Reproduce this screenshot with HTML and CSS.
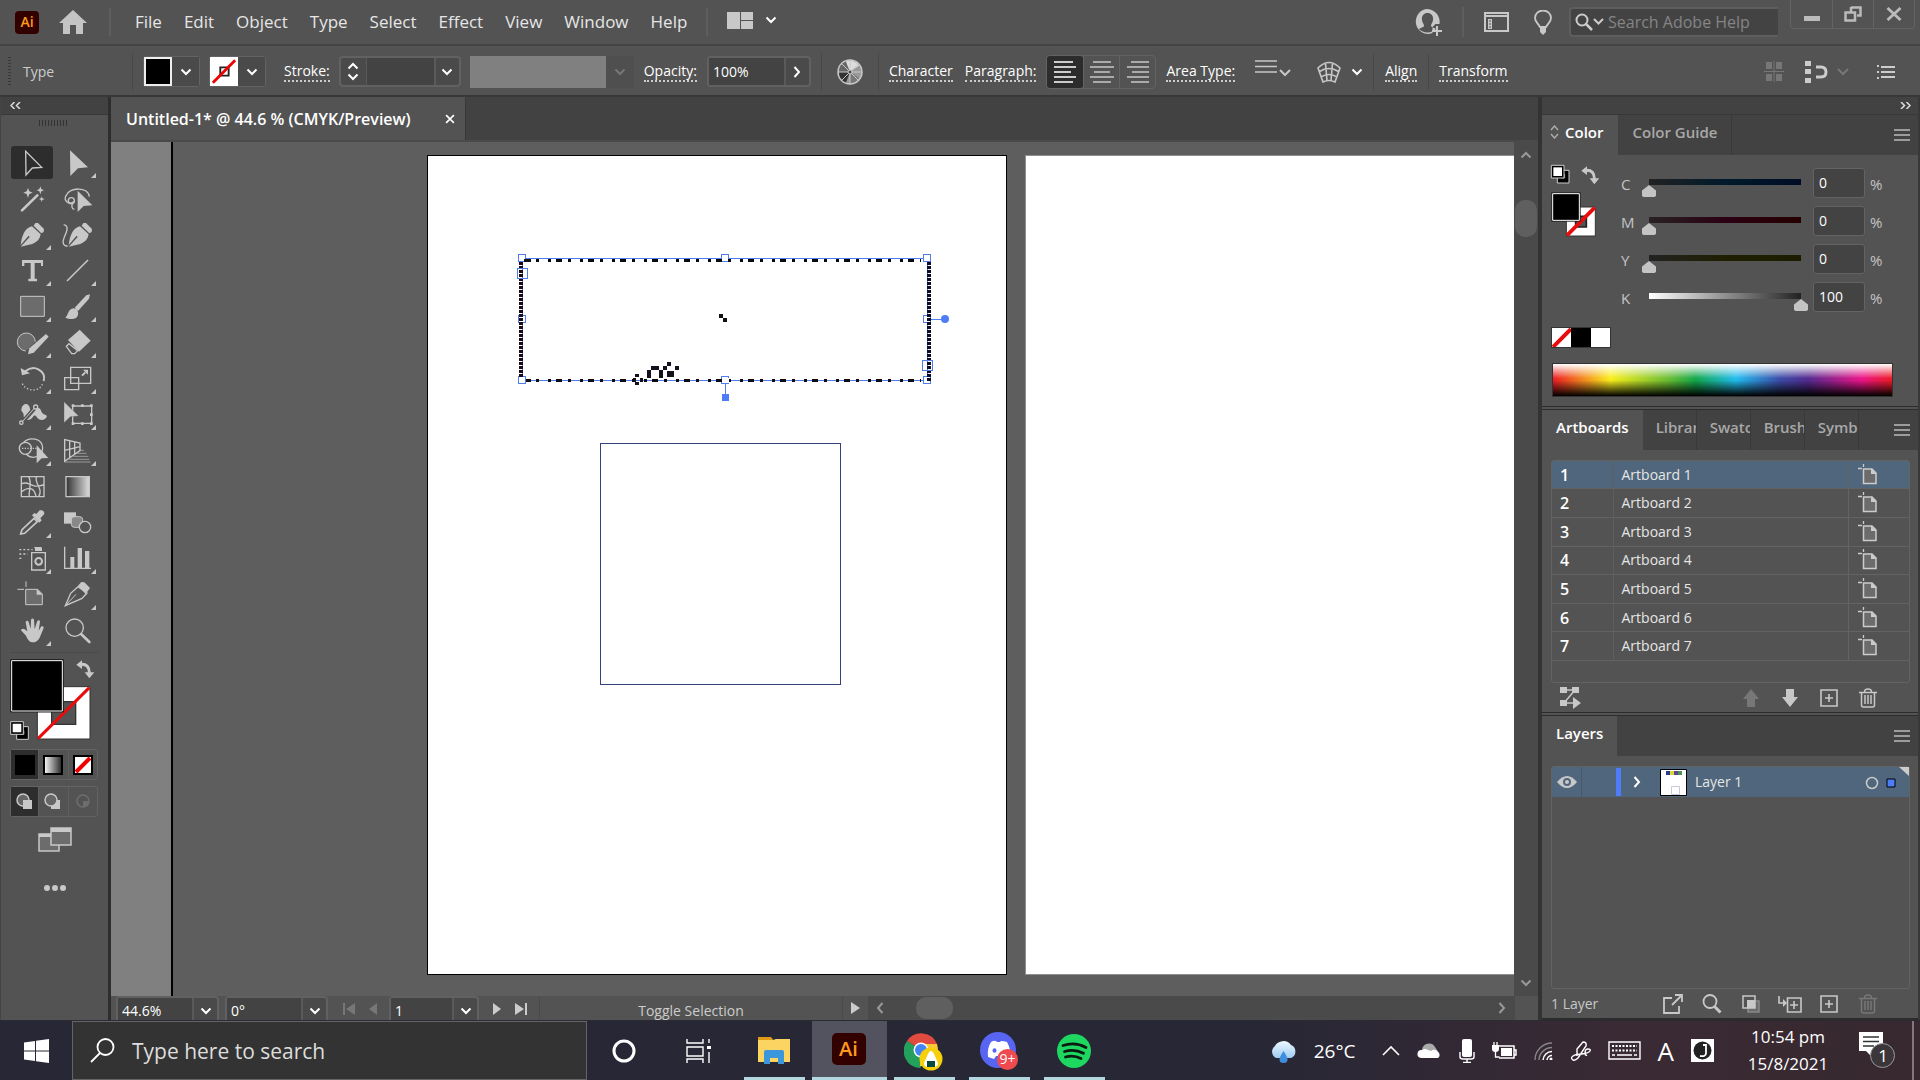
FILE: index.html
```html
<!DOCTYPE html>
<html lang="en">
<head>
<meta charset="utf-8">
<title>Untitled-1 - Adobe Illustrator</title>
<link rel="stylesheet" href="styles.css">
</head>
<body>
<svg class="defs" aria-hidden="true">
  <defs>
    <symbol id="chev-down" viewBox="0 0 12 8"><path d="M1.500 1.500 6 6l4.500-4.500" fill="none" stroke="currentColor" stroke-width="2"/></symbol>
    <symbol id="chev-up" viewBox="0 0 12 8"><path d="M1.500 6.500 6 2l4.500 4.500" fill="none" stroke="currentColor" stroke-width="2"/></symbol>
    <symbol id="chev-right" viewBox="0 0 8 12"><path d="M1.500 1 6 6l-4.500 5" fill="none" stroke="currentColor" stroke-width="2"/></symbol>
    <symbol id="chev-left" viewBox="0 0 8 12"><path d="M6.500 1 2 6l4.500 5" fill="none" stroke="currentColor" stroke-width="2"/></symbol>
    <symbol id="lines" viewBox="0 0 16 12"><path d="M0 1h16M0 6h16M0 11h16" stroke="currentColor" stroke-width="1.500"/></symbol>
    <symbol id="plus-box" viewBox="0 0 18 18"><path d="M1 1h16v16H1zM9 5v8M5 9h8" fill="none" stroke="currentColor" stroke-width="1.600"/></symbol>
    <symbol id="trash" viewBox="0 0 18 20"><path d="M0 4.500h18M5.500 4c0-4 7-4 7 0M2.500 5v12q0 2 2 2h9q2 0 2-2V5M6 7v9M9 7v9M12 7v9" fill="none" stroke="currentColor" stroke-width="1.500"/></symbol>
    <symbol id="page" viewBox="0 0 20 22"><path d="M5.500 5h8.500l4 4v10.500H5.500z" fill="#6c6c6c" stroke="#ccc" stroke-width="1.500"/><path d="M13 4.500V10h5.500z" fill="#ccc"/><path d="M0 4.500h4M5.500 0v3" stroke="#ccc" stroke-width="1.300"/></symbol>
    <symbol id="swap" viewBox="228 480 56 56"><path d="M244 493q24-1 24 26" fill="none" stroke="#c8c8c8" stroke-width="9"/><path d="m229 494 17-13v26zM254 517h29l-15 18z" fill="#c8c8c8"/></symbol>
    <symbol id="default-colors" viewBox="28 661 60 60"><path d="M50 680h35v38H50z" fill="#000" stroke="#ccc" stroke-width="3"/><path d="M62 692h10v11H62z" fill="#535353" stroke="#aaa" stroke-width="2"/><path d="M32 665h38v38H32z" fill="#000" stroke="#ccc" stroke-width="3"/><path d="M38 671h26v26H38z" fill="#fff"/></symbol>
    <linearGradient id="bw"><stop stop-color="#fff"/><stop offset="1" stop-color="#222"/></linearGradient>
    <linearGradient id="wb"><stop stop-color="#333"/><stop offset="1" stop-color="#ddd"/></linearGradient>
    <linearGradient id="cloud" x2="0" y2="1"><stop stop-color="#eef7ff"/><stop offset="1" stop-color="#9ecdf3"/></linearGradient>
  </defs>
</svg>

<div class="app">
  <header class="menubar">
    <span class="logo">Ai</span>
    <button class="home" aria-label="Home"><svg width="28" height="24" viewBox="0 0 28 24"><path d="M14 0 28 13h-4v11h-7v-9h-6v9H4V13H0z" fill="#c4c4c4"/></svg></button>
    <nav class="menus">
      <button>File</button><button>Edit</button><button>Object</button><button>Type</button><button>Select</button><button>Effect</button><button>View</button><button>Window</button><button>Help</button>
    </nav>
    <button class="arrange" aria-label="Arrange documents"><svg width="26" height="17" viewBox="0 0 26 17"><path d="M0 0h13v17H0zM14 0h12v8H14zM14 9h12v8H14z" fill="#c8c8c8"/></svg><svg width="12" height="8"><use href="#chev-down"/></svg></button>
    <div class="menubar-right">
      <button class="account" aria-label="Account"><svg width="28" height="27" viewBox="0 0 28 27"><path fill-rule="evenodd" d="M12.500 0a12 12.500 0 1 0 5 24v-6l3-3h4A13 13 0 0 0 12.500 0zM12.500 4c4 0 6 3 5.500 7-.3 3-2 4-2 5.500 0 2 3 2 5 3.500-4 4.500-13 4.500-17 0 2-1.500 5-1.500 5-3.500C9 15 7.300 14 7 11c-.5-4 1.500-7 5.500-7z" fill="#c8c8c8"/><path d="M22 17v10M17 22h10" stroke="#c8c8c8" stroke-width="2"/></svg></button>
      <button class="panel-toggle" aria-label="Toggle panel"><svg width="25" height="20" viewBox="0 0 25 20"><path d="M1 1h23v18H1z" fill="none" stroke="#c8c8c8" stroke-width="2"/><path d="M1 4h23" stroke="#c8c8c8" stroke-width="2"/><path d="M4 7h4v10H4z" fill="#c8c8c8"/><path d="M5 9h2M5 12h2M5 15h2" stroke="#535353"/></svg></button>
      <button class="bulb" aria-label="Learn"><svg width="18" height="25" viewBox="0 0 18 25"><path d="M6 17C4 13 1 12 1 8a8 7.500 0 0 1 16 0c0 4-3 5-5 9z" fill="none" stroke="#c8c8c8" stroke-width="1.800"/><path d="M6 17h6v5l-3 3-3-3z" fill="#c8c8c8"/></svg></button>
      <label class="help-search"><svg width="30" height="18" viewBox="0 0 30 18"><circle cx="7" cy="7" r="5.500" fill="none" stroke="#ccc" stroke-width="2"/><path d="m11 11 6 6" stroke="#ccc" stroke-width="2.500"/><path d="m19 6 4.500 4.500L28 6" fill="none" stroke="#ccc" stroke-width="2"/></svg><input type="text" placeholder="Search Adobe Help" aria-label="Search Adobe Help"></label>
      <div class="window-buttons">
        <button aria-label="Minimize"><svg width="16" height="16" viewBox="0 0 16 16"><path d="M0 10h16v5H0z" fill="#bbb"/></svg></button>
        <button aria-label="Restore"><svg width="18" height="16" viewBox="0 0 18 16"><path d="M7 1.500h9.500v8H13M1.500 6.500H11v8H1.500z" fill="none" stroke="#bbb" stroke-width="2.500"/><path d="M7 1v5" stroke="#bbb" stroke-width="2.500"/></svg></button>
        <button aria-label="Close"><svg width="16" height="14" viewBox="0 0 16 14"><path d="m1.500 1 13 12M14.500 1l-13 12" stroke="#bbb" stroke-width="2.800"/></svg></button>
      </div>
    </div>
  </header>

  <section class="controlbar">
    <div class="grip"></div>
    <div class="context">Type</div>
    <div class="swatch-pick"><span class="chip chip-black"></span><button aria-label="Fill options"><svg width="12" height="8"><use href="#chev-down"/></svg></button></div>
    <div class="swatch-pick"><span class="chip"><svg width="26" height="27" viewBox="0 0 28 28"><path d="M10 9.500h9v9h-9z" fill="none" stroke="#222" stroke-width="2"/><path d="M2 26 26 2" stroke="#e00" stroke-width="3"/></svg></span><button aria-label="Stroke options"><svg width="12" height="8"><use href="#chev-down"/></svg></button></div>
    <label class="dotted stroke-label" for="stroke-w">Stroke:</label>
    <div class="combo stroke-combo">
      <div class="spinner"><button aria-label="Increase"><svg width="12" height="8"><use href="#chev-up"/></svg></button><button aria-label="Decrease"><svg width="12" height="8"><use href="#chev-down"/></svg></button></div>
      <input id="stroke-w" type="text">
      <button aria-label="Stroke widths"><svg width="12" height="8"><use href="#chev-down"/></svg></button>
    </div>
    <div class="profile"><span></span><button disabled aria-label="Profile"><svg width="12" height="8"><use href="#chev-down"/></svg></button></div>
    <label class="dotted opacity-label" for="opacity">Opacity:</label>
    <div class="combo opacity-combo"><input id="opacity" type="text" value="100%"><button aria-label="Opacity slider"><svg width="8" height="12"><use href="#chev-right"/></svg></button></div>
    <button class="recolor" aria-label="Recolor artwork"><svg width="26" height="26" viewBox="0 0 26 26"><circle cx="13" cy="13" r="12" fill="#999" stroke="#c8c8c8" stroke-width="1.500"/><path d="M13 13 9 2.500A11 11 0 0 0 2 13z" fill="#666"/><path d="M13 13 9 2.500a11 11 0 0 1 13 4z" fill="#ddd"/><path d="M13 13H2a11 11 0 0 0 7 10.500z" fill="#333"/><path d="M13 13v11a11 11 0 0 0 9-5z" fill="#777"/><path d="M13 1v24M1 13h24M4.500 4.500l17 17M21.500 4.500l-17 17" stroke="#c8c8c8" stroke-width="1"/><circle cx="13" cy="13" r="2" fill="#444" stroke="#ccc"/></svg></button>
    <button class="dotted">Character</button>
    <button class="dotted">Paragraph:</button>
    <div class="align-group">
      <button class="on" aria-label="Align left"><svg width="24" height="22" viewBox="0 0 24 22"><path d="M1 1h19M1 6h22M1 11h17M1 16h22M1 21h19" stroke="#fff" stroke-width="1.500"/></svg></button><button aria-label="Align center"><svg width="24" height="22" viewBox="0 0 24 22"><path d="M3 1h18M0 6h24M4 11h16M0 16h24M3 21h18" stroke="#c8c8c8" stroke-width="1.500"/></svg></button><button aria-label="Align right"><svg width="24" height="22" viewBox="0 0 24 22"><path d="M5 1h18M1 6h22M6 11h17M1 16h22M5 21h18" stroke="#c8c8c8" stroke-width="1.500"/></svg></button>
    </div>
    <button class="dotted">Area Type:</button>
    <button class="area-opts" aria-label="Area type options"><svg width="36" height="18" viewBox="0 0 36 18"><path d="M0 2h22M0 7.500h22M0 13h22" stroke="#c8c8c8" stroke-width="1.600"/><path d="m25 11 5 5 5-5" fill="none" stroke="#c8c8c8" stroke-width="2"/></svg></button>
    <button class="warp" aria-label="Envelope"><svg width="24" height="22" viewBox="0 0 24 22"><path d="M1 7Q12-4 23 7L18 21q-6-3-12 0zM8.500 2 10 19.500M15.500 2 14 19.500M2.500 10.500q9.500-6 19 0M4 16q8-5 16 0" fill="none" stroke="#c8c8c8" stroke-width="1.600"/></svg><svg width="12" height="8"><use href="#chev-down"/></svg></button>
    <div class="bar-cell"><button class="dotted">Align</button></div>
    <button class="dotted transform">Transform</button>
    <div class="controlbar-right">
      <svg width="20" height="21" viewBox="0 0 20 21"><path d="M2 1h6v7H2zM12 1h6v7h-6zM2 13h6v7H2zM12 13h6v7h-6zM0 10h20v1H0zM9.500 0h1v21h-1z" fill="#777"/></svg>
      <svg width="46" height="22" viewBox="0 0 46 22"><path d="M0 0h6v5H0zM0 8h6v5H0zM0 17h6v5H0z" fill="#ccc"/><path d="M11 6h5q5 0 5 5t-5 5h-5" fill="none" stroke="#ccc" stroke-width="3"/><path d="m33 8 5 5 5-5" fill="none" stroke="#777" stroke-width="2"/></svg>
      <svg width="18" height="14" viewBox="0 0 18 14"><path d="M0 1h2M0 7h2M0 13h2M4 2h14M4 7h14M4 12h14" stroke="#ccc" stroke-width="2"/></svg>
    </div>
  </section>

  <main class="workspace">
    <aside class="tools">
      <div class="dock-head"><svg width="11" height="7" viewBox="0 0 11 7"><path d="M4.500 0 1 3.500 4.500 7M10 0 6.500 3.500 10 7" fill="none" stroke="#ddd" stroke-width="1.500"/></svg></div>
      <div class="tool-grip"></div>
      <div class="tool-grid">
        <button class="on" aria-label="Selection"><svg viewBox="33 18 126 99"><path d="m77 34 48 48-28 2-19 21z" class="l"/></svg></button>
        <button class="more" aria-label="Direct selection"><svg viewBox="168 18 126 99"><path d="m210 31 54 51-30 3-23 23z" class="f"/></svg></button>
        <button aria-label="Magic wand"><svg viewBox="33 126 126 99"><path d="m66 211 46-45" class="l" stroke-width="7"/><path d="m84 144 4 10 10 4-10 4-4 11-4-11-10-4 10-4zM121 139l3 8 8 4-8 3-3 9-3-9-8-3 8-4zM125 169l2 6 7 2-7 3-2 6-2-6-6-3 6-2z" class="f"/></svg></button>
        <button aria-label="Lasso"><svg viewBox="168 126 126 99"><path d="M224 184c-18 14-34-3-26-17 10-26 66-28 70 3M223 207q-10 2-6-20" class="l"/><circle cx="214" cy="182" r="9" class="l"/><path d="m233 152 44 44-26 2-18 18z" class="f"/></svg></button>
        <button class="more" aria-label="Pen"><svg viewBox="33 234 126 99"><path d="m96 259 26 24q-4 22-25 29l-35 8 27-29-3-4-24 28q6-50 34-56zM106 249l8 0 18 18-1 9-7 4-23-23z" class="f"/></svg></button>
        <button aria-label="Curvature"><svg viewBox="168 234 126 99"><path d="m240 259 26 24q-4 22-25 29l-35 8 27-29-3-4-24 28q6-50 34-56zM250 249l8 0 18 18-1 9-7 4-23-23z" class="f"/><path d="M191 254c18 4 8 24 2 37-7 16-4 28 10 27" class="l"/></svg></button>
        <button class="more" aria-label="Type"><svg viewBox="33 342 126 99"><path d="M66 360h63v18h-6v-9h-19v47h7v8H85v-8h7v-47H73v9h-7z" class="f"/></svg></button>
        <button class="more" aria-label="Line"><svg viewBox="168 342 126 99"><path d="m201 423 63-63" class="l" stroke-width="5"/></svg></button>
        <button class="more" aria-label="Rectangle"><svg viewBox="33 450 126 99"><path d="M62 469h71v60H62z" class="g"/></svg></button>
        <button class="more" aria-label="Paintbrush"><svg viewBox="168 450 126 99"><path d="m270 463-3 13-33 37-10-10 35-37zM221 505c19 3 18 32-3 32-9 0-18 0-22-5 10-5 6-25 25-27z" class="f"/></svg></button>
        <button class="more" aria-label="Shaper"><svg viewBox="33 558 126 99"><path d="M77 633a27 27 0 1 1 29-28" class="g"/><path d="m138 582 8 8-45 48-17 5 4-18z" class="f"/></svg></button>
        <button class="more" aria-label="Eraser"><svg viewBox="168 558 126 99"><path d="m239 569 33 33-35 33-33-35z" class="f"/><path d="m207 611-8 8 16 22 9 0 9-9z" class="l"/></svg></button>
        <button class="more" aria-label="Rotate"><svg viewBox="33 666 126 99"><path d="M76 694c26-22 63-2 55 29" class="l" stroke-width="6"/><path d="m62 684 4 22 24-6z" class="f"/><path d="M67 731c12 24 50 26 60 2" class="l" stroke-dasharray="4 6"/></svg></button>
        <button class="more" aria-label="Scale"><svg viewBox="168 666 126 99"><path d="M212 682h60v48h-60zM194 713h42v36h-42z" class="l"/><path d="m246 707 10-10" class="l" stroke-width="6"/><path d="M249 689h15v15z" class="f"/></svg></button>
        <button class="more" aria-label="Width"><svg viewBox="33 774 126 99"><path d="M64 812c0-25 24-26 26-6l4 14c14-20 26-20 30-6 3 10 13 10 17 14-4 14-23 17-31 3-4-6-8-6-12 1-8 12-27 10-27-4 0-8-2-11-7-16z" class="f"/><path d="m66 848 40-46" fill="none" stroke="#535353" stroke-width="12"/><path d="m66 846 38-42" class="l" stroke-width="3"/><circle cx="64" cy="848" r="5" class="l"/><circle cx="107" cy="801" r="6" class="l"/></svg></button>
        <button class="more" aria-label="Free transform"><svg viewBox="168 774 126 99"><path d="M218 798h57v52h-57z" class="l"/><path d="M215 793h8v8h-8zM243 793h8v8h-8zM270 793h8v8h-8zM270 820h8v8h-8zM270 847h8v8h-8zM243 847h8v8h-8zM215 847h8v8h-8z" class="f"/><path d="m192 785 44 43-25 2-19 18z" class="f" stroke="#535353"/></svg></button>
        <button class="more" aria-label="Shape builder"><svg viewBox="33 882 126 99"><circle cx="76" cy="925" r="18" class="l"/><path d="M70 908c18-19 57-14 58 16 0 15-12 28-28 28-12 0-17-5-22-10" class="l"/><path d="M66 925h45" class="l" stroke-dasharray="4 4"/><path d="m110 916 35 38-20 1-15 15z" class="f"/></svg></button>
        <button class="more" aria-label="Perspective grid"><svg viewBox="168 882 126 99"><path d="M194 899v65l46-32v-23zM194 931l46-11M209 903v50M224 906v36" class="l"/><path d="M240 931h12M232 940h27M220 949h45M208 958h60M194 966h78" class="l" stroke-width="3" opacity=".6"/></svg></button>
        <button aria-label="Mesh"><svg viewBox="33 990 126 99"><path d="M64 1010h68v60H64zM64 1032c24-14 26 18 68 2M64 1056c26-20 40-10 44 14M86 1010c12 22-2 42 2 60M110 1010c-10 18 22 36 6 60" class="l"/></svg></button>
        <button aria-label="Gradient"><svg viewBox="168 990 126 99"><path d="M198 1010h70v60h-70z" fill="url(#wb)" stroke="#c8c8c8" stroke-width="4"/></svg></button>
        <button class="more" aria-label="Eyedropper"><svg viewBox="33 18 126 99"><path d="M102 55 66 89l-4 13 12-2 38-35z" class="l" stroke-width="5"/><path d="m96 46 7-7 6 3 10-11q14-3 14 11l-12 13 4 6-7 7z" class="f"/></svg></button>
        <button aria-label="Blend"><svg viewBox="168 18 126 99"><path d="M192 37h36v34h-36z" class="f"/><rect x="214" y="50" width="34" height="32" rx="9" fill="#888" stroke="#c8c8c8" stroke-width="3"/><circle cx="255" cy="81" r="17" fill="#535353" stroke="#c8c8c8" stroke-width="4"/></svg></button>
        <button class="more" aria-label="Symbol sprayer"><svg viewBox="33 126 126 99"><path d="M95 158h41v52H95z" class="l"/><circle cx="116" cy="184" r="10" class="l" stroke-width="6"/><path d="M105 153v-8h-2v-4h22v4h1v8z" class="f"/><path d="M58 149h40M58 162h25M58 175h12" class="l" stroke-dasharray="6 6"/></svg></button>
        <button class="more" aria-label="Graph"><svg viewBox="168 126 126 99"><path d="M194 140v65h79" class="l"/><path d="M211 171h12v34h-12zM233 144h13v61h-13zM255 153h13v52h-13z" class="f"/></svg></button>
        <button aria-label="Artboard"><svg viewBox="33 234 126 99"><path d="M77 268h36l14 14v32H77z" class="g"/><path d="M110 266v18h18z" class="f"/><path d="M52 268h20M78 244v17" class="l" stroke-width="3"/></svg></button>
        <button class="more" aria-label="Slice"><svg viewBox="168 234 126 99"><path d="m234 260-22 20-16 37 50-22 15-16z" class="l"/><path d="m196 317 32-34" class="l" stroke-width="3"/><path d="m234 257 10-11 9 1 17 17-13 18z" class="f"/></svg></button>
        <button class="more" aria-label="Hand"><svg viewBox="33 342 126 99"><path d="M78 407 63 391q2-8 11-3l8 6-5-28q5-7 9 0l6 21 1-28q5-7 9 0l2 29 8-26q7-4 8 3l-4 27 8-13q8-2 7 5l-12 29q-8 14-21 14-12 0-20-20z" class="f"/></svg></button>
        <button aria-label="Zoom"><svg viewBox="168 342 126 99"><circle cx="224" cy="383" r="26" class="l"/><path d="m244 403 24 23" class="l" stroke-width="8"/></svg></button>
      </div>
      <div class="fill-stroke"><svg width="90" height="82" viewBox="30 474 270 246">
        <path d="M112 560h158v157H112z" fill="#fff" stroke="#333" stroke-width="3"/><path d="M155 605h72v68h-72z" fill="#535353" stroke="#333" stroke-width="4"/><path d="m114 716 154-153" stroke="#e80c0c" stroke-width="9"/>
        <path d="M32 479h158v157H32z" fill="#000" stroke="#222" stroke-width="3"/><path d="M35 482h152v151H35z" fill="#000" stroke="#fff" stroke-width="3"/>
        <use href="#swap" x="228" y="480" width="56" height="56"/><use href="#default-colors" x="28" y="661" width="60" height="60"/></svg></div>
      <div class="mode-row">
        <button class="on" aria-label="Color"><svg width="20" height="20"><path d="M0 0h20v20H0z"/></svg></button><button aria-label="Gradient"><svg width="20" height="20"><path d="M1 1h18v18H1z" fill="url(#bw)" stroke="#000" stroke-width="2"/></svg></button><button aria-label="None"><svg width="20" height="20"><path d="M1 1h18v18H1z" fill="#fff" stroke="#000" stroke-width="2"/><path d="M3 17 17 3" stroke="#e00" stroke-width="4"/></svg></button>
      </div>
      <div class="mode-row">
        <button class="on" aria-label="Draw normal"><svg width="18" height="17"><circle cx="7" cy="7" r="6" fill="#666" stroke="#c8c8c8" stroke-width="1.500"/><path d="M7 7h9v9H7z" fill="#c8c8c8"/></svg></button><button aria-label="Draw behind"><svg width="18" height="17"><path d="M7 7h9v9H7z" fill="#c8c8c8"/><circle cx="7" cy="7" r="6" fill="#666" stroke="#c8c8c8" stroke-width="1.500"/></svg></button><button aria-label="Draw inside"><svg width="18" height="17"><circle cx="9" cy="8" r="6" fill="none" stroke="#6e6e6e" stroke-width="1.500"/><path d="M9 8h6q0 6-6 6z" fill="#6e6e6e"/></svg></button>
      </div>
      <button class="screen-mode" aria-label="Screen mode"><svg width="34" height="26" viewBox="0 0 34 26"><path d="M1 7h20v17H1z" fill="#6c6c6c" stroke="#c8c8c8" stroke-width="1.500"/><path d="M13 1h20v17H13z" fill="#6c6c6c" stroke="#c8c8c8" stroke-width="1.500"/><path d="M13 1h20v4H13zM1 7h12v3H1z" fill="#c8c8c8"/></svg></button>
      <button class="edit-tools" aria-label="Edit toolbar"><svg width="22" height="6"><circle cx="3" cy="3" r="3"/><circle cx="11" cy="3" r="3"/><circle cx="19" cy="3" r="3"/></svg></button>
    </aside>

    <section class="document">
      <div class="doc-tabs"><div class="doc-tab"><span>Untitled-1* @ 44.6 % (CMYK/Preview)</span><button aria-label="Close document"><svg width="10" height="10" viewBox="0 0 9 9"><path d="m1 1 7 7M8 1 1 8" stroke="#fff" stroke-width="1.500"/></svg></button></div></div>
      <div class="doc-body">
        <div class="canvas">
          <svg class="artwork" viewBox="111 142 2000 1200" shape-rendering="crispEdges">
            <path d="M111 142h61v1200h-61z" fill="#808080"/><path d="M172 142v1200" stroke="#000" stroke-width="2"/>
            <path d="M427.500 155.500h579v819h-579z" fill="#fff" stroke="#000"/>
            <path d="M1025.500 155.500h579v819h-579z" fill="#fff" stroke="#909090"/>
            <path d="M600.500 443.500h240v241h-240z" fill="#fff" stroke="#33417f"/>
            <path d="M522 258.500h405M522 380.500h405M522.500 258v122M927.500 258v122M725.500 380v14M928 319.500h14" stroke="#4f7dee" fill="none"/>
            <path d="M518.500 254.500h7v7h-7zM721.500 254.500h7v7h-7zM923.500 254.500h7v7h-7zM518.500 315.500h7v7h-7zM923.500 315.500h7v7h-7zM518.500 376.500h7v7h-7zM721.500 376.500h7v7h-7zM923.500 376.500h7v7h-7z" fill="#fff" stroke="#4f7dee"/>
            <path d="M536 260.500h385M536 380.500h385" stroke="#0b0a12" stroke-width="3" stroke-dasharray="3 9 3 5 6 6"/>
            <path d="M521 262v115" stroke="#1c0b12" stroke-width="4" stroke-dasharray="3 1"/>
            <path d="M929 262v119" stroke="#0c0d28" stroke-width="4" stroke-dasharray="3 1"/>
            <path d="M524 260.500h7M526 380.500h5" stroke="#111" stroke-width="3"/><path d="M719 314h4v4h-4zM723 318h4v4h-4z" fill="#111"/>
            <path d="M635 374h4v3h-4zM633 378h3v4h-3zM640 378h3v4h-3zM635 382h4v3h-4zM647 370h4v8h-4zM651 366h8v4h-8zM659 370h4v8h-4zM663 366h4v4h-4zM667 362h4v4h-4zM667 371h7v6h-7zM675 366h4v4h-4z" fill="#15101c"/>
            <path d="M722.500 377.500h6v5h-6z" fill="#fff"/>
            <path d="M517.500 268.500h10v10h-10zM922.500 360.500h10v10h-10z" fill="none" stroke="#4f7dee"/>
            <path d="M722 394h7v7h-7z" fill="#4f7dfa"/><circle cx="945" cy="319" r="4" fill="#4f7dfa" shape-rendering="auto"/>
          </svg>
        </div>
        <div class="vscroll"><svg width="12" height="8"><use href="#chev-up"/></svg><span></span><svg class="vdown" width="12" height="8"><use href="#chev-down"/></svg></div>
      </div>
      <footer class="statusbar">
        <div class="combo zoom-combo"><input type="text" value="44.6%" aria-label="Zoom"><button aria-label="Zoom levels"><svg width="12" height="8"><use href="#chev-down"/></svg></button></div>
        <div class="combo zoom-combo"><input type="text" value="0°" aria-label="Rotation"><button aria-label="Rotation values"><svg width="12" height="8"><use href="#chev-down"/></svg></button></div>
        <div class="pager"><svg width="12" height="12"><path d="M0 0h2v12H0zM12 0v12L3 6z" fill="#777"/></svg><svg width="8" height="12"><path d="M8 0v12L0 6z" fill="#777"/></svg></div>
        <div class="combo page-combo"><input type="text" value="1" aria-label="Artboard"><button aria-label="Artboard list"><svg width="12" height="8"><use href="#chev-down"/></svg></button></div>
        <div class="pager"><svg width="8" height="12"><path d="M0 0v12l8-6z"/></svg><svg width="12" height="12"><path d="M10 0h2v12h-2zM0 0v12l9-6z"/></svg></div>
        <div class="status-text">Toggle Selection</div>
        <button class="status-menu" aria-label="Status menu"><svg width="9" height="12"><path d="M0 0v12l9-6z" fill="#ccc"/></svg></button>
        <div class="hscroll"><svg width="8" height="12"><use href="#chev-left"/></svg><span></span><svg class="hright" width="8" height="12"><use href="#chev-right"/></svg></div>
      </footer>
    </section>

    <aside class="panels">
      <div class="dock-head dock-right"><svg width="11" height="7" viewBox="0 0 11 7"><path d="M1 0l3.500 3.500L1 7M6.500 0 10 3.500 6.500 7" fill="none" stroke="#ddd" stroke-width="1.500"/></svg></div>
      <section class="panel color-panel">
        <div class="tabs"><button class="tab active color-tab"><svg width="9" height="14" viewBox="0 0 9 14"><path d="m1 5 3.500-4L8 5M1 9l3.500 4L8 9" fill="none" stroke="#aaa" stroke-width="1.500"/></svg>Color</button><button class="tab">Color Guide</button><button class="panel-menu" aria-label="Panel menu"><svg width="16" height="12"><use href="#lines"/></svg></button></div>
        <div class="color-body">
          <svg class="mini-fill" width="50" height="74" viewBox="150 192 150 222">
            <use href="#default-colors" x="150" y="192" width="60" height="60"/><use href="#swap" x="243" y="198" width="56" height="56"/>
            <path d="M199 321h87v87h-87z" fill="#fff" stroke="#333" stroke-width="3"/><path d="M227 349h32v32h-32z" fill="#535353" stroke="#222" stroke-width="5"/><path d="m201 406 83-83" stroke="#e80c0c" stroke-width="11"/>
            <path d="M154 277h88v88h-88z" fill="#222"/><path d="M158 281h80v80h-80z" fill="#000" stroke="#fff" stroke-width="3"/></svg>
          <div class="sliders">
            <label for="sc">C</label><input id="sc" class="track track-c" type="range" value="0"><input type="text" value="0" aria-label="Cyan"><span>%</span>
            <label for="sm">M</label><input id="sm" class="track track-m" type="range" value="0"><input type="text" value="0" aria-label="Magenta"><span>%</span>
            <label for="sy">Y</label><input id="sy" class="track track-y" type="range" value="0"><input type="text" value="0" aria-label="Yellow"><span>%</span>
            <label for="sk">K</label><input id="sk" class="track track-k" type="range" value="100"><input type="text" value="100" aria-label="Black"><span>%</span>
          </div>
        </div>
        <div class="quick"><span><svg width="20" height="20"><path d="M1 19 19 1" stroke="#e80c0c" stroke-width="4"/></svg></span><span class="quick-black"></span><span></span></div>
        <div class="spectrum"></div>
      </section>

      <section class="panel artboards-panel">
        <div class="tabs"><button class="tab active">Artboards</button><button class="tab short">Librar</button><button class="tab short">Swatc</button><button class="tab short">Brush</button><button class="tab short">Symbo</button><button class="panel-menu" aria-label="Panel menu"><svg width="16" height="12"><use href="#lines"/></svg></button></div>
        <div class="list-box artboard-list">
          <table>
            <tr class="selected"><th>1</th><td>Artboard 1</td><td><svg width="20" height="22"><use href="#page"/></svg></td></tr>
            <tr><th>2</th><td>Artboard 2</td><td><svg width="20" height="22"><use href="#page"/></svg></td></tr>
            <tr><th>3</th><td>Artboard 3</td><td><svg width="20" height="22"><use href="#page"/></svg></td></tr>
            <tr><th>4</th><td>Artboard 4</td><td><svg width="20" height="22"><use href="#page"/></svg></td></tr>
            <tr><th>5</th><td>Artboard 5</td><td><svg width="20" height="22"><use href="#page"/></svg></td></tr>
            <tr><th>6</th><td>Artboard 6</td><td><svg width="20" height="22"><use href="#page"/></svg></td></tr>
            <tr><th>7</th><td>Artboard 7</td><td><svg width="20" height="22"><use href="#page"/></svg></td></tr>
          </table>
        </div>
        <div class="panel-foot">
          <button class="foot-first" aria-label="Rearrange"><svg width="22" height="22" viewBox="0 0 22 22"><path d="M0 0h7v6H0zM12 0h7v6h-7zM0 13h7v6H0zM13 10l8 6-8 6z" fill="#c8c8c8"/><path d="M3 3h12L4 16h10" fill="none" stroke="#c8c8c8" stroke-width="1.500"/></svg></button>
          <button disabled aria-label="Move up"><svg width="16" height="18"><path d="M8 0 0 10h4v8h8v-8h4z" fill="#777"/></svg></button>
          <button aria-label="Move down"><svg width="16" height="18"><path d="M8 18 0 8h4V0h8v8h4z" fill="#c8c8c8"/></svg></button>
          <button aria-label="New artboard"><svg width="18" height="18"><use href="#plus-box"/></svg></button>
          <button aria-label="Delete artboard"><svg width="18" height="20"><use href="#trash"/></svg></button>
        </div>
      </section>

      <section class="panel layers-panel">
        <div class="tabs"><button class="tab active">Layers</button><button class="panel-menu" aria-label="Panel menu"><svg width="16" height="12"><use href="#lines"/></svg></button></div>
        <div class="list-box layer-list">
          <div class="layer-row">
            <button class="eye" aria-label="Visibility"><svg width="20" height="12" viewBox="0 0 20 12"><path d="M0 6Q10-6 20 6 10 18 0 6z" fill="#c8c8c8"/><circle cx="10" cy="6" r="4" fill="#4f667c"/><circle cx="10" cy="6" r="2" fill="#c8c8c8"/></svg></button>
            <span class="layer-color"></span>
            <button class="expand" aria-label="Expand"><svg width="8" height="12"><use href="#chev-right"/></svg></button>
            <svg width="27" height="27"><path d="M.500.500h26v26H.500z" fill="#fff" stroke="#000"/><path d="M6 2h4v4H6z" fill="#2b3d8a"/><path d="M10 2h4v4h-4z" fill="#d8d83c"/><path d="M14 2h4v4h-4z" fill="#5b468c"/><path d="M18 2h4v4h-4z" fill="#4f9058"/><path d="M11.500 17.500h8v8h-8z" fill="none" stroke="#c8c8d8"/></svg>
            <span class="layer-name">Layer 1</span>
            <svg width="44" height="30"><path d="M34 0h10v9z" fill="#ccc"/><circle cx="7" cy="16" r="5.500" fill="none" stroke="#ccc" stroke-width="1.500"/><path d="M22 12h8v8h-8z" fill="#4f7dfa" stroke="#000"/></svg>
          </div>
        </div>
        <div class="panel-foot">
          <span class="foot-first">1 Layer</span>
          <button aria-label="Export"><svg width="20" height="20" viewBox="0 0 20 20"><path d="M9 4H1v15h15v-7M9 11 18 2M12 1h7v7" fill="none" stroke="#c8c8c8" stroke-width="1.800"/></svg></button>
          <button aria-label="Find"><svg width="20" height="20" viewBox="0 0 20 20"><circle cx="8" cy="7.500" r="6.500" fill="none" stroke="#c8c8c8" stroke-width="1.800"/><path d="m12.500 12.500 6 6" stroke="#c8c8c8" stroke-width="3"/></svg></button>
          <button aria-label="Clipping mask"><svg width="18" height="18" viewBox="0 0 18 18"><path d="M6 6h11v11H6z" fill="#6c6c6c" stroke="#888" stroke-width="1.500"/><path d="M1 1h12v12H1z" fill="none" stroke="#c8c8c8" stroke-width="1.500"/><path d="M5 5h8v8H5z" fill="#c8c8c8"/></svg></button>
          <button aria-label="New sublayer"><svg width="24" height="18" viewBox="0 0 24 18"><path d="M9.500 3H23v14H9.500zM16 6v8M12 10h8M1 1v7h5" fill="none" stroke="#c8c8c8" stroke-width="1.600"/><path d="m5 4 4 4-4 4z" fill="#c8c8c8"/></svg></button>
          <button aria-label="New layer"><svg width="18" height="18"><use href="#plus-box"/></svg></button>
          <button disabled aria-label="Delete layer"><svg width="18" height="20"><use href="#trash"/></svg></button>
        </div>
      </section>
    </aside>
  </main>

  <footer class="taskbar">
    <button class="start" aria-label="Start"><svg width="25" height="24" viewBox="0 0 25 24"><path d="M0 3.500 11 2v9.500H0zM12 1.800 25 0v11.500H12zM0 12.500h11V22L0 20.500zM12 12.500h13V24l-13-1.800z" fill="#fff"/></svg></button>
    <label class="task-search"><svg width="25" height="25" viewBox="0 0 25 25"><circle cx="15.500" cy="9" r="8" fill="none" stroke="#fff" stroke-width="1.800"/><path d="M10 15 1 24" stroke="#fff" stroke-width="1.800"/></svg><input type="text" placeholder="Type here to search" aria-label="Type here to search"></label>
    <div class="task-apps">
      <button aria-label="Cortana"><svg width="24" height="24"><circle cx="12" cy="12" r="10" fill="none" stroke="#fff" stroke-width="3"/></svg></button>
      <button aria-label="Task view"><svg width="25" height="24" viewBox="0 0 25 24"><path d="M1 0v4h16V0M1 8h16v9H1zM1 24v-4h16v4M23 0v4M23 13v11" fill="none" stroke="#fff" stroke-width="1.400"/><path d="M21 7h4v3h-4z" fill="#fff"/></svg></button>
      <button class="running" aria-label="File Explorer"><svg width="34" height="27" viewBox="0 0 34 27"><path d="M1 0h13l3 4H1z" fill="#e09b16"/><path d="M1 3h15l3-1h14v23H1z" fill="#fcd462"/><path d="M7 27V15q0-2 2-2h16q2 0 2 2v12h-6v-6h-8v6z" fill="#3b96dc"/></svg></button>
      <button class="running current" aria-label="Illustrator"><span class="logo logo-lg">Ai</span></button>
      <button class="running" aria-label="Chrome"><svg width="40" height="40" viewBox="0 0 40 40"><path d="M17 19 3 10A17 17 0 0 1 33 13H17z" fill="#e04a3f"/><path d="M17 19 3 10a17 17 0 0 0 13 27l9-13z" fill="#22a05c"/><path d="M17 19V13h16q4 14-8 22h-9z" fill="#fcc934"/><circle cx="17" cy="19" r="7.500" fill="#fff"/><circle cx="17" cy="19" r="6" fill="#4285f4"/><circle cx="27" cy="28" r="11.500" fill="#f7cf0a"/><path d="M27 20q2 0 3 3l4 9q0 4-4 4h-6q-4 0-4-4l4-9q1-3 3-3z" fill="#fff"/><path d="M23 30h8v6h-8z" fill="#094a3a"/></svg></button>
      <button class="running" aria-label="Discord"><svg width="38" height="38" viewBox="0 0 38 38"><circle cx="18" cy="18" r="18" fill="#5865f2"/><path d="M11 10q3-2 5-1l1 1h3l1-1q3 0 6 1 4 7 3 15l-5 2-2-3h-7l-2 3-6-2q-1-9 3-15z" fill="#fff"/><ellipse cx="14.500" cy="18.500" rx="2" ry="2.300" fill="#5865f2"/></svg><span class="badge">9+</span></button>
      <button class="running" aria-label="Spotify"><svg width="34" height="34" viewBox="0 0 34 34"><circle cx="17" cy="17" r="17" fill="#1ed760"/><path d="M6 11.500q12-4 23 2M7.500 17.500q10-3 19 1.800M8.500 23q8-2.500 15.500 1.500" fill="none" stroke="#0b1a10" stroke-width="2.800" stroke-linecap="round"/></svg></button>
    </div>
    <div class="tray">
      <button class="weather"><svg width="31" height="24" viewBox="0 0 31 24"><path d="M8 19a7 7 0 0 1-1-12A9 8 0 0 1 23 6a7 7 0 0 1 0 13z" fill="url(#cloud)"/><path d="M15.500 12q4 6 4 8.500a4 3.500 0 0 1-8 0q0-2.500 4-8.500z" fill="#3e8fdc"/></svg>26°C</button>
      <button aria-label="Hidden icons"><svg width="18" height="11"><path d="m1 10 8-8 8 8" fill="none" stroke="#fff" stroke-width="1.600"/></svg></button>
      <button aria-label="OneDrive"><svg width="25" height="17" viewBox="0 0 25 17"><path d="M5 8a7 7 0 0 1 13-3l4 6-10 2z" fill="#aaa"/><path d="M4 16a4 4 0 0 1 1-8q3-2 6 0l3 1q4-3 7 1a3.600 3.600 0 0 1 0 6z" fill="#fff"/></svg></button>
      <button aria-label="Microphone"><svg width="16" height="24"><rect x="3" width="10" height="18" rx="2" fill="#fff"/><path d="M1 13v5q0 2 3 2h8q3 0 3-2v-5M8 20v3M4 23.500h8" fill="none" stroke="#fff" stroke-width="1.400"/></svg></button>
      <button aria-label="Battery"><svg width="25" height="18" viewBox="0 0 25 18"><path d="M6 4h16v12H7M22 8h2v5h-2" fill="none" stroke="#fff" stroke-width="1.500"/><path d="M9 6h11v8H9zM0 3h7v4q0 3-3.500 3T0 7z" fill="#fff"/><path d="M2 0v3M5 0v3M3.500 9v6h4" fill="none" stroke="#fff" stroke-width="1.300"/></svg></button>
      <button aria-label="Network"><svg width="19" height="18" viewBox="0 0 19 18"><path d="M1 18A17 17 0 0 1 18 1M5 18A13 13 0 0 1 18 5.500" fill="none" stroke="#888" stroke-width="1.400"/><path d="M9 18a9 9 0 0 1 9-8.500M13 18a5 5 0 0 1 5-4.500" fill="none" stroke="#fff" stroke-width="1.500"/><circle cx="17" cy="17" r="1.500" fill="#fff"/></svg></button>
      <button aria-label="Pen"><svg width="21" height="20" viewBox="0 0 21 20"><path d="M7 15V8l6-7q4 0 3 4l-8 12q-3 3-5 2-3-2 0-4t9-2q7-1 8-3t-2-2-3 4q0 3 2 2" fill="none" stroke="#fff" stroke-width="1.400"/></svg></button>
      <button aria-label="Touch keyboard"><svg width="33" height="19" viewBox="0 0 33 19"><path d="M1 1h31v17H1z" fill="none" stroke="#fff" stroke-width="1.400"/><path d="M4 5h25M4 9.500h25" stroke="#fff" stroke-width="2" stroke-dasharray="2 1.500"/><path d="M4 14h3M9 14h15M26 14h3" stroke="#fff" stroke-width="1.500"/></svg></button>
      <button class="lang">A</button>
      <button aria-label="Input mode"><svg width="23" height="23" viewBox="0 0 23 23"><path d="M0 0h23v23H0z" fill="#fff"/><circle cx="11.500" cy="11.500" r="9" fill="#222"/><path d="M12 6h3v8q0 4-6 3" fill="none" stroke="#fff" stroke-width="1.800"/></svg></button>
      <button class="clock"><span>10:54 pm</span><span>15/8/2021</span></button>
      <button class="notify" aria-label="Notifications"><svg width="36" height="38" viewBox="0 0 36 38"><path d="M0 0h24v19H13v6l-6-6H0z" fill="#fff"/><path d="M4 5h16M4 9.500h16M4 14h11" stroke="#333" stroke-width="1.300"/><circle cx="23.500" cy="23.500" r="12" fill="#3a3639" stroke="#999"/></svg><span class="count">1</span></button>
      <span class="show-desktop"></span>
    </div>
  </footer>
</div>
</body>
</html>
```
FILE: styles.css
```css
* { box-sizing: border-box; }
body { margin: 0; background: #535353; color: #e6e6e6; font: 14px/20px "Open Sans", "Noto Sans", sans-serif; }
button { display: flex; align-items: center; justify-content: center; margin: 0; padding: 0; border: 0; background: none; color: inherit; font: inherit; white-space: nowrap; }
input { min-width: 0; margin: 0; padding: 0; border: 0; background: none; color: #fff; font: inherit; outline: 0; }
svg { display: block; flex: none; }
.defs { position: absolute; width: 0; height: 0; }
.app { display: grid; grid-template-rows: 46px 51px minmax(0, 1fr) 60px; height: 100vh; min-width: 1500px; overflow: hidden; }

/* Menu bar */
.menubar { display: flex; align-items: center; border-bottom: 2px solid #434343; font-size: 17px; padding-left: 15px; }
.logo { display: flex; align-items: center; justify-content: center; width: 24px; height: 23px; border-radius: 4px; background: #330000; color: #ff9a1a; font-size: 14px; font-weight: 600; line-height: 16px; }
.logo-lg { width: 34px; height: 32px; margin-bottom: 4px; border-radius: 5px; font-size: 20px; font-weight: 600; line-height: 24px; }
.home { margin-left: 20px; }
.menus { display: flex; gap: 22px; margin-left: 22px; padding: 4px 19px 4px 24px; border-left: 2px solid #5e5e5e; border-right: 2px solid #5e5e5e; }
.arrange { gap: 12px; margin-left: 19px; padding-bottom: 4px; color: #fff; }
.menubar-right { display: flex; align-items: center; align-self: stretch; margin-left: auto; padding-right: 5px; }
.account { padding-right: 19px; height: 30px; border-right: 2px solid #5e5e5e; }
.panel-toggle { margin-left: 20px; }
.bulb { margin: 0 17px 0 25px; }
.help-search { display: flex; align-items: center; gap: 3px; width: 209px; height: 30px; padding-left: 4px; border: 2px solid #5e5e5e; border-right: 0; border-radius: 4px 0 0 4px; background: #434343; font-size: 16px; }
.help-search input { flex: 1; }
.help-search input::placeholder { color: #858585; opacity: 1; }
.window-buttons { display: flex; align-self: flex-start; margin-left: 12px; border: 1px solid #636363; border-top: 0; border-radius: 0 0 4px 4px; }
.window-buttons button { width: 41px; height: 28px; border-left: 1px solid #636363; }
.window-buttons button:first-child { border-left: 0; }

/* Control bar */
.controlbar { display: flex; align-items: center; padding: 2px 25px 0 8px; border-bottom: 2px solid #383838; color: #fff; }
.grip { width: 3px; height: 29px; background: repeating-linear-gradient(#383838 0 1px, transparent 1px 3px); }
.context { display: flex; align-items: center; width: 122px; height: 38px; padding-left: 12px; margin-right: 10px; border-right: 1px solid #484848; color: #ccc; }
.swatch-pick { display: flex; width: 57px; height: 31px; margin-right: 9px; border: 1px solid #636363; border-radius: 3px; }
.swatch-pick button { flex: 1; background: #4a4a4a; }
.chip { width: 28px; height: 29px; border: 1px solid #fff; background: #fff; }
.chip-black { border: 2px solid #eee; background: #000; }
.dotted { border-bottom: 2px dotted #ccc; line-height: 18px; color: #fff; }
.stroke-label { margin: 0 9px; }
.combo { display: flex; height: 31px; border: 2px solid #616161; border-radius: 4px; color: #fff; background: #4a4a4a; }
.combo input { flex: 1; padding-left: 4px; background: #434343; }
.combo > button { width: 25px; border-left: 2px solid #5a5a5a; }
.stroke-combo { width: 122px; margin-right: 9px; }
.spinner { display: flex; flex-direction: column; justify-content: space-evenly; width: 26px; border-right: 1px solid #5a5a5a; }
.profile { display: flex; width: 164px; height: 32px; margin-right: 10px; }
.profile span { flex: 1; background: #808080; }
.profile button { width: 28px; background: #4f4f4f; color: #777; }
.opacity-label { margin-right: 10px; }
.opacity-combo { width: 104px; margin-right: 10px; }
.recolor { width: 58px; height: 38px; margin-right: 10px; border: 1px solid #484848; border-width: 0 1px; }
.dotted + .dotted { margin-left: 12px; }
.align-group { display: flex; height: 34px; margin: 0 10px; border: 1px solid #636363; border-radius: 4px; }
.align-group button { width: 36px; border-left: 1px solid #636363; }
.align-group .on { border: 0; border-radius: 3px; background: #2c2c2c; }
.area-opts { margin: 0 26px 8px 20px; }
.warp { gap: 10px; }
.bar-cell { margin: 0 10px; padding: 8px 11px; border: 1px solid #484848; border-width: 0 1px; }
.controlbar-right { display: flex; align-items: center; gap: 21px; margin-left: auto; }
.controlbar-right svg:last-child { margin-left: 5px; }

.workspace { display: grid; grid-template-columns: 111px minmax(0, 1fr) 380px; min-height: 0; }

/* Tool palette */
.tools { border-right: 3px solid #2e2e2e; border-left: 1px solid #444; padding-bottom: 8px; }
.dock-head { display: flex; align-items: center; height: 18px; padding: 0 9px; background: #424242; border-bottom: 1px solid #383838; }
.dock-right { flex: none; justify-content: flex-end; padding-right: 7px; }
.tool-grip { width: 29px; height: 6px; margin: 5px 0 0 38px; background: repeating-linear-gradient(90deg, #333 0 1px, transparent 1px 3px); }
.tool-grid { display: grid; grid-template-columns: 42px 42px; gap: 3px; margin: 20px 0 5px 10px; }
.tool-grid button { position: relative; height: 33px; border-radius: 3px; }
.tool-grid svg { width: 42px; height: 33px; }
.tool-grid .on { background: #2d2d2d; }
.more::after { content: ""; position: absolute; right: 2px; bottom: 1px; border: solid transparent; border-width: 0 0 5px 5px; border-bottom-color: #c8c8c8; }
.f { fill: #c8c8c8; }
.l { fill: none; stroke: #c8c8c8; stroke-width: 4px; }
.l[stroke-width="3"] { stroke-width: 3px; }
.l[stroke-width="5"] { stroke-width: 5px; }
.l[stroke-width="6"] { stroke-width: 6px; }
.l[stroke-width="7"], .l[stroke-width="8"] { stroke-width: 8px; stroke-linecap: round; }
.g { fill: #6c6c6c; stroke: #c8c8c8; stroke-width: 3px; }
.fill-stroke { margin: 0 9px 9px; padding-top: 5px; border-top: 1px solid #4a4a4a; }
.mode-row { display: flex; width: 88px; height: 31px; margin: 0 0 6px 9px; border: 1px solid #636363; border-radius: 3px; }
.mode-row button { flex: 1; border-left: 1px solid #5e5e5e; }
.mode-row .on { flex: 0 0 27px; border: 0; background: #2d2d2d; }
.screen-mode { margin: 10px 0 32px 37px; }
.edit-tools { margin-left: 43px; fill: #c8c8c8; }

/* Document */
.document { display: grid; grid-template-rows: 45px minmax(0, 1fr) 24px; min-width: 0; border-right: 2px solid #333; }
.doc-tabs { display: flex; background: #424242; border-bottom: 2px solid #4a4a4a; }
.doc-tab { display: flex; align-items: center; justify-content: space-between; min-width: 355px; padding: 1px 10px 0 15px; background: #535353; color: #fff; font-size: 16px; font-weight: 600; border-right: 1px solid #383838; }
.doc-body { display: grid; grid-template-columns: minmax(0, 1fr) 24px; }
.canvas { position: relative; overflow: hidden; background: #5e5e5e; }
.artwork { position: absolute; left: 0; top: 0; width: 2000px; height: 1200px; }
.vscroll { display: flex; flex-direction: column; align-items: center; padding: 9px 0; background: #4a4a4a; color: #999; }
.vscroll span { width: 22px; height: 37px; margin-top: 41px; border-radius: 10px; background: #5f5f5f; }
.vdown { margin-top: auto; }
.statusbar { display: flex; overflow: hidden; color: #ccc; }
.statusbar .combo { height: 30px; }
.zoom-combo { width: 103px; margin: 0 1px 0 5px; }
.page-combo { width: 90px; }
.pager { display: flex; align-items: center; gap: 14px; padding: 2px 12px 0 14px; fill: #ccc; }
.status-text { width: 304px; padding-top: 5px; border: 1px solid #4a4a4a; border-width: 0 1px; text-align: center; }
.status-menu { width: 25px; }
.hscroll { display: flex; flex: 1; align-items: center; padding-left: 8px; background: linear-gradient(90deg, #4a4a4a calc(100% - 23px), #535353 0); color: #999; }
.hscroll span { width: 37px; height: 22px; margin-left: 32px; border-radius: 10px; background: #5f5f5f; }
.hright { margin: 0 32px 0 auto; }

/* Panels */
.panels { display: flex; flex-direction: column; min-height: 0; border-left: 2px solid #333; border-right: 2px solid #383838; }
.panel { display: flex; flex-direction: column; flex: none; border-bottom: 4px double #2c2c2c; }
.tabs { display: flex; height: 40px; background: #424242; }
.tab { flex: none; padding: 0 14px 6px; border-right: 1px solid #393939; color: #a8a8a8; font-size: 15px; font-weight: 600; }
.tab.active { background: #535353; color: #fff; border-right: 0; }
.tab.color-tab { gap: 6px; padding: 0 15px 6px 8px; }
.tab.short { justify-content: flex-start; width: 54px; padding: 0 0 6px 13px; overflow: hidden; }
.panel-menu { margin: 0 8px 0 auto; color: #bbb; }
.color-body { display: flex; padding: 13px 10px 0 8px; }
.mini-fill { margin-top: -4px; }
.sliders { display: grid; grid-template-columns: 21px 166px 5px 52px 1fr; row-gap: 8px; flex: 1; margin-left: 21px; color: #c4c4c4; font-size: 15px; }
.sliders label, .sliders span { align-self: center; padding-top: 2px; }
.sliders span { padding-left: 5px; }
.sliders input[type="text"] { grid-column: 4; height: 30px; padding: 0 0 2px 5px; border: 1px solid #636363; border-radius: 3px; background: #434343; font-size: 14px; }
.track { -webkit-appearance: none; appearance: none; height: 18px; margin-top: 5px; background: none; }
.track::-webkit-slider-runnable-track { height: 6px; background: var(--ramp) 7px 0 / calc(100% - 14px) 6px no-repeat; }
.track::-webkit-slider-thumb { -webkit-appearance: none; width: 14px; height: 12px; margin-top: 6px; background: #c4c4c4; clip-path: polygon(50% 0, 100% 45%, 100% 90%, 90% 100%, 10% 100%, 0 90%, 0 45%); }
.track-c { --ramp: linear-gradient(90deg, #222, #001a2b 50%, #000c24); }
.track-m { --ramp: linear-gradient(90deg, #2a2224, #2b0013 50%, #260000); }
.track-y { --ramp: linear-gradient(90deg, #222, #1f1f00 50%, #1c1c00); }
.track-k { --ramp: linear-gradient(90deg, #fff, #222); }
.quick { display: flex; width: 60px; height: 21px; margin: 15px 0 15px 9px; border: 1px solid #333; }
.quick span { flex: 1; background: #fff; overflow: hidden; }
.quick .quick-black { background: #000; }
.spectrum { height: 34px; margin: 0 25px 9px 10px; border: 1px solid #333; background: linear-gradient(#fff, #fff0 45%, #0000 50%, #000), linear-gradient(90deg, #ed1c24, #f9ef1c 17%, #62bb35 35%, #13a84b 42%, #22bdf0 54%, #3c4ca8 67%, #522b90 75%, #ec1589 91%, #ed1c24); }
.list-box { margin: 10px 8px 0 9px; border: 1px solid #636363; border-radius: 3px; }
.artboard-list { height: 223px; }
table { width: 100%; height: 200px; border-collapse: collapse; }
th, td { padding: 0; border-bottom: 1px solid #636363; text-align: left; }
th { width: 61px; padding-left: 8px; border-right: 1px solid #5e5e5e; color: #fff; font-size: 16px; font-weight: 600; }
td { padding-left: 8px; }
td:last-child { width: 61px; padding-left: 9px; border-left: 1px solid #636363; }
.selected, .layer-row { background: #4f667c; }
.panel-foot { display: flex; align-items: center; height: 29px; padding-right: 31px; color: #c8c8c8; }
.panel-foot button { width: 39px; }
.panel-foot button:disabled { color: #777; }
.panel-foot .foot-first { width: auto; margin: 0 auto 0 9px; }
.artboards-panel .foot-first { margin-left: 18px; }
.layers-panel { flex: 1; min-height: 0; border-bottom-width: 2px; }
.layer-list { flex: 1; }
.layer-row { display: flex; align-items: center; height: 30px; }
.eye { width: 30px; height: 30px; border-right: 1px solid #46596c; }
.layer-color { width: 5px; height: 28px; margin-left: 34px; background: #4f7dfa; }
.expand { width: 39px; padding-right: 8px; color: #fff; }
.layer-name { flex: 1; padding-left: 8px; }

/* Taskbar */
.taskbar { display: flex; align-items: stretch; background: linear-gradient(90deg, #272735 0 65%, #3a2a34 85%, #37292f); color: #fff; border-top: 1px solid #2b2b33; }
.start { width: 72px; }
.task-search { display: flex; align-items: center; gap: 17px; width: 515px; padding-left: 17px; border: 1px solid #646464; background: #333; font-size: 21px; }
.task-search input { flex: 1; height: 40px; }
.task-search input::placeholder { color: #ddd; opacity: 1; }
.task-apps { display: flex; }
.task-apps button { position: relative; width: 75px; padding-right: 2px; }
.running::after { content: ""; position: absolute; left: 7px; right: 7px; bottom: 0; height: 3px; background: #b3d7de; }
.current { background: #53525f; }
.current::after { left: 0; right: 0; }
.badge { position: absolute; left: 35px; top: 28px; width: 21px; height: 21px; border-radius: 50%; background: #ee4a4f; font-size: 14px; line-height: 20px; }
.tray { display: flex; align-items: center; gap: 17px; margin-left: auto; }
.weather { gap: 15px; margin-right: 9px; font-size: 19px; }
.lang { font-size: 26px; }
.clock { flex-direction: column; gap: 7px; width: 88px; margin-left: 13px; font-size: 17px; }
.notify { position: relative; margin-left: 10px; }
.count { position: absolute; right: 0; bottom: 4px; width: 24px; font-size: 17px; text-align: center; }
.show-desktop { align-self: stretch; width: 8px; border-left: 2px solid #81787c; }
```
